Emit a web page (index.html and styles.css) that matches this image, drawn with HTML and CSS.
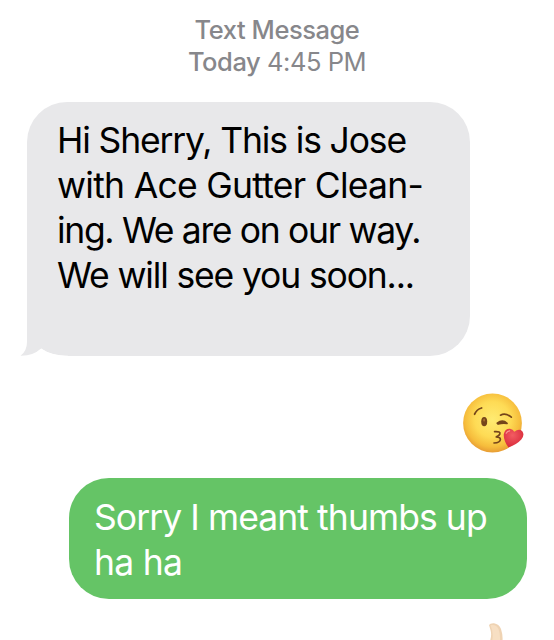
FILE: index.html
```html
<!doctype html>
<html lang="en">
<head>
    <meta charset="UTF-8">
    <title>Messages</title>
    <link rel="stylesheet" href="styles.css">
</head>
<body>
    <main class="thread">
        <header class="stamp">
            <div class="stampType">Text Message</div>
            <div class="stampTime"><span class="stampDay">Today</span> 4:45 PM</div>
        </header>

        <div class="bubble received">
            <div class="line r1">Hi Sherry, This is Jose</div>
            <div class="line r2">with Ace Gutter Clean-</div>
            <div class="line r3">ing. We are on our way.</div>
            <div class="line r4">We will see you soon...</div>
            <svg class="tail" width="48" height="20" viewBox="0 0 48 20">
                <path fill="#fff" d="M0 0H7V20H48V19.700Q31 19.500 21 12.500Q13 19 1 19.600L0 20Z"/>
                <path fill="#fff" d="M7 20V18.500L21 12.500Q31 19.500 45 20Z"/>
                <path fill="#e8e8ea" d="M7 0H21V12.500Q13 20 .5 19.700Q7 15 7 6Z"/>
            </svg>
        </div>

        <svg class="kiss" width="64" height="62" viewBox="0 0 64 62">
            <defs>
                <radialGradient id="face" cx="50%" cy="44%" r="55%">
                    <stop offset="0" stop-color="#ffeb72"/>
                    <stop offset="0.55" stop-color="#fedb55"/>
                    <stop offset="0.85" stop-color="#f6bd3c"/>
                    <stop offset="1" stop-color="#e9a035"/>
                </radialGradient>
                <radialGradient id="heart" cx="45%" cy="35%" r="65%">
                    <stop offset="0" stop-color="#f25c62"/>
                    <stop offset="1" stop-color="#d92b3b"/>
                </radialGradient>
            </defs>
            <circle cx="30.500" cy="31" r="29.400" fill="url(#face)"/>
            <g fill="none" stroke="#75451a" stroke-linecap="round" stroke-linejoin="round">
                <path stroke-width="1.800" d="M12.600 22.200Q14.500 17.500 19.600 16"/>
                <path stroke-width="1.700" d="M38.500 23.200Q43.500 20.400 49.300 25.200"/>
                <path stroke-width="1.800" d="M35.300 31.200Q40.500 27.300 45 31.300Q40.500 30.500 36.100 32"/>
                <path stroke-width="1.700" d="M32.600 39.700Q39 39.300 37.800 42.100Q37 44 34.300 44.900Q38.500 45.300 38.400 47.500Q38.100 50.700 32 51"/>
            </g>
            <ellipse cx="22.200" cy="29.600" rx="3" ry="4.700" fill="#75451a"/>
            <ellipse cx="22.100" cy="28" rx="1" ry="1.600" fill="#a66d2d"/>
            <path fill="url(#heart)" d="M46.500 55.500Q41.300 48.500 41.800 42Q43 36.400 48 36.700Q51 37 52.300 39.800Q57 36.200 60.300 39.200Q63 43 59.300 47.500Q55 52.300 46.500 55.500Z"/>
            <path fill="none" stroke="#f99a98" stroke-width="1.200" stroke-linecap="round" d="M44.200 41.200Q45.300 38.800 47.700 38.800"/>
        </svg>

        <div class="bubble sent">
            <div class="line s1">Sorry I meant thumbs up</div>
            <div class="line s2">ha ha</div>
        </div>

        <svg class="thumb" width="18" height="18" viewBox="0 0 18 18">
            <path fill="#efd3b3" d="M2 2Q3 0 7 .2Q12 1 14 6Q16 12 15.500 18H3Q5 12 3.500 7Z"/>
            <path fill="#f7dfc3" d="M3.500 2.200Q9 .8 11.500 6Q13.500 11 13 18H5Q7 10 3.500 2.200Z"/>
        </svg>
    </main>
</body>
</html>
```
FILE: styles.css
```css
body {
    margin: 0;
    background-color: #ffffff;
    font-family: Inter, "Liberation Sans", sans-serif;
}

.thread {
    box-sizing: border-box;
    display: flex;
    flex-direction: column;
    width: 554px;
    height: 640px;
    padding: 14px 27px 0;
    overflow: hidden;
}

.stamp {
    height: 88px;
    flex-shrink: 0;
    font-size: 25.500px;
    line-height: 32px;
    color: #87878b;
    text-align: center;
    white-space: nowrap;
}

.stampType {
    font-weight: 500;
    letter-spacing: -0.450px;
}

.stampTime {
    letter-spacing: -0.450px;
}

.stampDay {
    font-weight: 500;
}

.bubble {
    box-sizing: border-box;
    flex-shrink: 0;
    border-radius: 40px;
    font-size: 35.500px;
    line-height: 45px;
}

.line {
    width: max-content;
    white-space: nowrap;
}

/* tracking per line */
.r1 { letter-spacing: -1.150px; }
.r2 { letter-spacing: -0.720px; }
.r3 { letter-spacing: -1.330px; }
.r4 { letter-spacing: -1.150px; }
.s1 { letter-spacing: -0.920px; }
.s2 { letter-spacing: -0.750px; }

.received {
    position: relative;
    width: 443px;
    height: 254px;
    padding: 16.400px 0 0 30px;
    border-bottom-left-radius: 0;
    background-color: #e8e8ea;
    color: #000000;
}

.tail {
    position: absolute;
    left: -7px;
    bottom: 0;
}

.kiss {
    flex-shrink: 0;
    align-self: flex-end;
    margin: 36px 1px 24px 0;
}

.sent {
    align-self: flex-end;
    width: 458px;
    height: 121px;
    padding: 16.600px 0 0 25px;
    background-color: #65c466;
    color: #ffffff;
}

.thumb {
    flex-shrink: 0;
    align-self: flex-end;
    margin: 24px 22px 0 0;
}
```
